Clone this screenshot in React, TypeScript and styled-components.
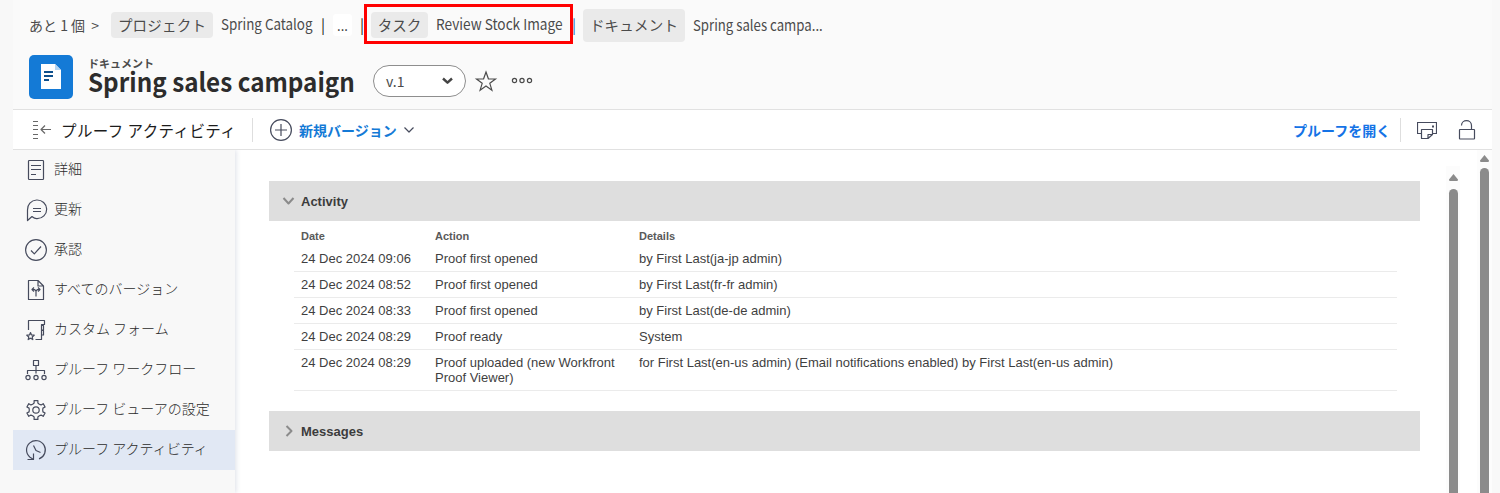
import React from "react";
import styled, { createGlobalStyle } from "styled-components";

const Global = createGlobalStyle`
  * { box-sizing: border-box; }
  body { margin: 0; background: #f8f8f8; overflow: hidden; }
`;

const ui = `"Noto Sans CJK JP", sans-serif`;
const arial = `"Liberation Sans", Arial, sans-serif`;

const Page = styled.div`
  width: 1500px;
  height: 493px;
  padding: 0 8px 0 13px;
  background: #f8f8f8;
  font-family: ${ui};
  color: #4b4b4b;
  overflow: hidden;
`;

const Header = styled.header`
  height: 110px;
  background: #fafafa;
  border-bottom: 1px solid #e1e1e1;
`;

const Breadcrumb = styled.nav`
  display: flex;
  align-items: center;
  height: 50px;
  padding-left: 16px;
  font-size: 15px;
  line-height: 20px;
  white-space: nowrap;
`;

const More = styled.span`
  width: 82px;
  font-size: 14px;
`;

const Chip = styled.span<{ $w: number; $tall?: boolean; $ls?: number }>`
  display: flex;
  align-items: center;
  justify-content: center;
  width: ${(p) => p.$w}px;
  height: ${(p) => (p.$tall ? 33 : 26)}px;
  border-radius: 4px;
  background: #eaeaea;
  letter-spacing: ${(p) => p.$ls ?? 0}px;
  font-size: 14.5px;
`;

const CrumbText = styled.span<{ $w: number; $scale: number; $down?: boolean }>`
  width: ${(p) => p.$w}px;
  margin: 0 0 ${(p) => (p.$down ? 0 : 2)}px 8px;
  transform: scaleX(${(p) => p.$scale});
  transform-origin: left;
`;

const Bar = styled.span<{ $l: number; $r: number; $c?: string }>`
  display: flex;
  justify-content: center;
  width: 2px;
  margin: 0 ${(p) => p.$r}px 0 ${(p) => p.$l}px;
  color: ${(p) => p.$c ?? "#222"};
`;

const Ellipsis = styled.span`
  width: 19px;
  height: 22px;
  border-radius: 3px;
  background: #fff;
  color: #222;
  text-align: center;
  font-size: 13px;
  line-height: 24px;
`;

const Marked = styled.span`
  position: relative;
  display: flex;
  align-items: center;
`;

const Outline = styled.span`
  position: absolute;
  top: -8px;
  left: -7px;
  width: 209px;
  height: 40px;
  border: 3px solid #f00;
`;

const TitleRow = styled.div`
  display: flex;
  padding: 5px 0 0 16px;
`;

const TitleBlock = styled.div`
  width: 285px;
  margin-left: 15px;
  white-space: nowrap;
`;

const Kicker = styled.div`
  margin-top: 2px;
  font-size: 11px;
  font-weight: 700;
  line-height: 13px;
`;

const Title = styled.h1`
  width: 285px;
  margin: -1px 0 0;
  font-size: 26px;
  line-height: 24px;
  font-weight: 700;
  color: #2c2c2c;
  transform: scaleX(0.932);
  transform-origin: left;
`;

const Version = styled.div`
  display: flex;
  align-items: center;
  justify-content: space-between;
  width: 93px;
  height: 32px;
  margin-top: 10px;
  padding: 0 12px;
  border: 1px solid #8e8e8e;
  border-radius: 16px;
  background: #fff;
  font-size: 14px;
`;

const Toolbar = styled.div`
  display: flex;
  align-items: center;
  height: 40px;
  padding-left: 19px;
  background: #fff;
  border-bottom: 1px solid #e1e1e1;
  white-space: nowrap;
`;

const ToolTitle = styled.span`
  width: 191px;
  margin-left: 9px;
  font-size: 15.5px;
  letter-spacing: 0.4px;
  color: #1c1c1c;
`;

const Rule = styled.i<{ $r: number }>`
  width: 1px;
  height: 24px;
  margin-right: ${(p) => p.$r}px;
  background: #dedede;
`;

const ToolLink = styled.span<{ $w: number; $c: string }>`
  width: ${(p) => p.$w}px;
  margin-left: 6px;
  font-size: 14px;
  font-weight: 700;
  color: ${(p) => p.$c};
`;

const Spacer = styled.span`
  flex: 1;
`;

const Body = styled.div`
  display: flex;
  height: 343px;
`;

const Sidebar = styled.aside`
  z-index: 1;
  width: 222px;
  background: #f8f8f8;
  box-shadow: 1px 0 5px rgba(60, 80, 120, 0.18);
  clip-path: inset(0 -8px 0 0);
`;

const Item = styled.div<{ $on?: boolean }>`
  display: flex;
  align-items: center;
  height: 40px;
  padding-left: 11px;
  background: ${(p) => (p.$on ? "#e1e8f4" : "transparent")};
  color: #2b2b2b;
  font-size: 14px;
  font-weight: 300;
  white-space: nowrap;
`;

const ItemText = styled.span`
  margin: 0 0 4px 6px;
`;

const Content = styled.main`
  flex: 1;
  padding: 31px 0 0 34px;
  background: #fff;
  font-family: ${arial};
  color: #3f3f3f;
`;

const Section = styled.div`
  display: flex;
  align-items: center;
  width: 1151px;
  height: 40px;
  padding-left: 13px;
  background: #dedede;
  font-size: 13px;
  font-weight: 700;
  color: #3c3c3c;
  svg { margin-right: 6px; }
`;

const Table = styled.div`
  width: 1103px;
  margin: 0 0 20px 25px;
  padding-top: 6px;
`;

const Row = styled.div<{ $head?: boolean }>`
  display: grid;
  grid-template-columns: 134px 204px 1fr;
  padding: ${(p) => (p.$head ? "2px 0 2px 7px" : "5px 0 5px 7px")};
  border-bottom: ${(p) => (p.$head ? "0" : "1px solid #ebebeb")};
  font-size: ${(p) => (p.$head ? 11 : 13)}px;
  font-weight: ${(p) => (p.$head ? 700 : 400)};
  line-height: 15px;
  color: ${(p) => (p.$head ? "#5a5a5a" : "#3f3f3f")};
`;

const Cell = styled.span`
  padding-right: 12px;
`;

const Track = styled.div<{ $w: number; $top: number; $r?: number; $gap: number; $thumb: number }>`
  display: flex;
  flex-direction: column;
  align-items: center;
  width: ${(p) => p.$w}px;
  margin: ${(p) => p.$top}px ${(p) => p.$r ?? 0}px 0 0;
  background: #fcfcfc;
  svg { margin: ${(p) => p.$gap}px 0 ${(p) => p.$thumb}px; flex: none; }
`;

const Thumb = styled.i`
  flex: 1;
  width: 9px;
  border-radius: 5px 5px 0 0;
  background: #8b8b8b;
`;

const Scrolls = styled.div`
  display: flex;
  background: #fff;
`;

const HeaderActions = styled.svg`
  margin-top: 14px;
`;

const Glyph = styled.svg`
  flex: none;
`;

const Up = () => (
  <svg width="9" height="7" viewBox="0 0 9 7"><path d="M4.500 0L9 5.500Q9 7 8 7H1Q0 7 0 5.500Z" fill="#8b8b8b" /></svg>
);

const Icon = ({ w = 24, h = 24, sw = 1.2, children, c = "#464b5d" }: { w?: number; h?: number; sw?: number; c?: string; children: React.ReactNode }) => (
  <Glyph width={w} height={h} viewBox={`0 0 ${w} ${h}`} fill="none" stroke={c} strokeWidth={sw} strokeLinejoin="round">
    {children}
  </Glyph>
);

const gear = (() => {
  const pts: string[] = [];
  for (let i = 0; i < 6; i++) {
    const a = (i * 60 - 90) * (Math.PI / 180);
    [[-0.26, 7.2], [-0.2, 9.6], [0.2, 9.6], [0.26, 7.2], [0.52, 6.7]].forEach(([d, r]) => {
      pts.push(`${(12 + r * Math.cos(a + d)).toFixed(2)} ${(12 + r * Math.sin(a + d)).toFixed(2)}`);
    });
  }
  return `M${pts.join("L")}Z`;
})();

const items: { text: string; on?: boolean; icon: React.ReactNode }[] = [
  { text: "詳細", icon: <><rect x="4.500" y="2.500" width="15" height="19" rx="0.800" /><path d="M7 7.500h10M7 11.500h10M7 16.500h5" /></> },
  { text: "更新", icon: <><path d="M3.500 22.500V12A9.600 9.300 0 1 1 13 20.600C10.500 20.800 9.500 19.800 8 18.500Z" /><path d="M9 10.500h8M9 13.500h8" /></> },
  { text: "承認", icon: <><circle cx="12" cy="12" r="10.400" /><path d="M7 12.500l3.300 3.300L17 8.500" /></> },
  { text: "すべてのバージョン", icon: <><path d="M4.500 2.500H14L19.500 8V21.500H4.500ZM14 2.500V8h5.500" /><path d="M12 18.500v-5.500L10.500 11.500H8M12 13l1.500-1.500H16M10 9.500l-2 2 2 2M14 9.500l2 2-2 2" /></> },
  { text: "カスタム フォーム", icon: <><path d="M4.500 12V2.500H20.500V6.500H17.500V21.500H11.500M17.500 7.500h2v4.500h-2M17.500 12.500h2v4.500h-2" /><path d="M6.500 14.500l1 2.500 2.700.2-2 1.800.6 2.600-2.300-1.400-2.300 1.400.6-2.600-2-1.800 2.700-.2Z" /></> },
  { text: "プルーフ ワークフロー", icon: <><rect x="9.500" y="2.500" width="5" height="5" /><path d="M12 7.500v8M3.500 16v-3.500h17V16" /><circle cx="4" cy="19.500" r="2.100" /><circle cx="12" cy="19.500" r="2.100" /><circle cx="20" cy="19.500" r="2.100" /></> },
  { text: "プルーフ ビューアの設定", icon: <><path d={gear} /><circle cx="12" cy="12" r="3.200" /></> },
  { text: "プルーフ アクティビティ", on: true, icon: <><path d="M15 20.900A9.400 9.400 0 1 0 6 19.300L9.500 21.500M9.500 15.500v6h-6M9.500 7.500l2.500 5 4.500 2" /></> },
];

const rows = [
  ["24 Dec 2024 09:06", "Proof first opened", "by First Last(ja-jp admin)"],
  ["24 Dec 2024 08:52", "Proof first opened", "by First Last(fr-fr admin)"],
  ["24 Dec 2024 08:33", "Proof first opened", "by First Last(de-de admin)"],
  ["24 Dec 2024 08:29", "Proof ready", "System"],
  ["24 Dec 2024 08:29", "Proof uploaded (new Workfront Proof Viewer)", "for First Last(en-us admin) (Email notifications enabled) by First Last(en-us admin)"],
];

export default function App() {
  return (
    <Page>
      <Global />
      <Header>
        <Breadcrumb>
          <More>あと 1 個 &nbsp;&gt;</More>
          <Chip $w={102} $ls={0.2}>プロジェクト</Chip>
          <CrumbText $w={92} $scale={0.893}>Spring Catalog</CrumbText>
          <Bar $l={9} $r={9}>|</Bar>
          <Ellipsis>...</Ellipsis>
          <Bar $l={9} $r={8}>|</Bar>
          <Marked>
            <Chip $w={57}>タスク</Chip>
            <CrumbText $w={128} $scale={0.91}>Review Stock Image</CrumbText>
            <Outline />
          </Marked>
          <Bar $l={9} $r={8} $c="#1f6fb5">|</Bar>
          <Chip $w={102} $tall $ls={0.2}>ドキュメント</Chip>
          <CrumbText $w={140} $scale={0.88} $down>Spring sales campa...</CrumbText>
        </Breadcrumb>
        <TitleRow>
          <svg width="44" height="44" viewBox="0 0 44 44">
            <rect width="44" height="44" rx="5" fill="#147ad6" />
            <path d="M12 9H26L32 15V34H12Z" fill="#fff" />
            <path d="M26 9L32 15H26Z" fill="#b5d5f2" />
            <path d="M15 17h9M15 21h9M15 25h5" stroke="#0d4f8c" strokeWidth="2" />
          </svg>
          <TitleBlock>
            <Kicker>ドキュメント</Kicker>
            <Title>Spring sales campaign</Title>
          </TitleBlock>
          <Version>
            v.1
            <Icon w={11} h={8} sw={2.4} c="#444"><path d="M1 1.500l4.500 4.200L10 1.500" /></Icon>
          </Version>
          <HeaderActions width="80" height="24" viewBox="0 0 80 24" fill="none" stroke="#4b4b4b" strokeWidth="1.200">
            <path d="M20 3l2.400 6.800 7.100.2-5.700 4.300 2.100 6.900L20 17.100l-5.900 4.100 2.100-6.900L10.500 10l7.100-.2Z" />
            <circle cx="48.500" cy="11.500" r="2.100" /><circle cx="56" cy="11.500" r="2.100" /><circle cx="63.500" cy="11.500" r="2.100" />
          </HeaderActions>
        </TitleRow>
      </Header>
      <Toolbar>
        <Icon w={20} h={22}>
          <path d="M1 2.500h5M1 6.500h5M1 10.500h5M1 15.500h5M1 19.500h5M19 10.500H9M13 6.500l-4 4 4 4" stroke="#686868" />
        </Icon>
        <ToolTitle>プルーフ アクティビティ</ToolTitle>
        <Rule $r={16} />
        <Icon>
          <circle cx="12" cy="12" r="10.400" /><path d="M12 6v12M6 12h12" />
        </Icon>
        <ToolLink $w={105} $c="#147ad6">新規バージョン</ToolLink>
        <Icon w={10} h={8}><path d="M.500 1.500L5 6l4.500-4.500" /></Icon>
        <Spacer />
        <ToolLink $w={107} $c="#1473e6">プルーフを開く</ToolLink>
        <Rule $r={16} />
        <Icon w={20} h={20}>
          <path d="M4.500 13.500H.500V2.500h19v11H15.500M4.500 9.500h11v5L11 18.500H4.500ZM11 18.500V14.500h4.500" /><path d="M16 5.500v2" strokeWidth="2" />
        </Icon>
        <Icon w={55} h={22}>
          <rect x="22.500" y="10.500" width="15" height="9.500" rx="0.500" /><path d="M24.500 6.500C24.500 0 34.500 0 34.500 6.500V10.500" />
        </Icon>
      </Toolbar>
      <Body>
        <Sidebar>
          {items.map((it) => (
            <Item key={it.text} $on={it.on}>
              <Icon>{it.icon}</Icon>
              <ItemText>{it.text}</ItemText>
            </Item>
          ))}
        </Sidebar>
        <Content>
          <Section>
            <Icon w={13} h={10} sw={2} c="#8b8b8b"><path d="M1.500 2l5 5.500 5-5.500" /></Icon>
            Activity
          </Section>
          <Table>
            <Row $head><Cell>Date</Cell><Cell>Action</Cell><Cell>Details</Cell></Row>
            {rows.map((r) => (
              <Row key={r[0] + r[1]}>{r.map((c) => <Cell key={c}>{c}</Cell>)}</Row>
            ))}
          </Table>
          <Section>
            <Icon w={13} h={12} sw={2} c="#8b8b8b"><path d="M4.500 1l5 5-5 5" /></Icon>
            Messages
          </Section>
        </Content>
        <Scrolls>
          <Track $w={14} $top={16} $r={17} $gap={8} $thumb={8}><Up /><Thumb /></Track>
          <Track $w={15} $top={0} $gap={5} $thumb={6}><Up /><Thumb /></Track>
        </Scrolls>
      </Body>
    </Page>
  );
}
